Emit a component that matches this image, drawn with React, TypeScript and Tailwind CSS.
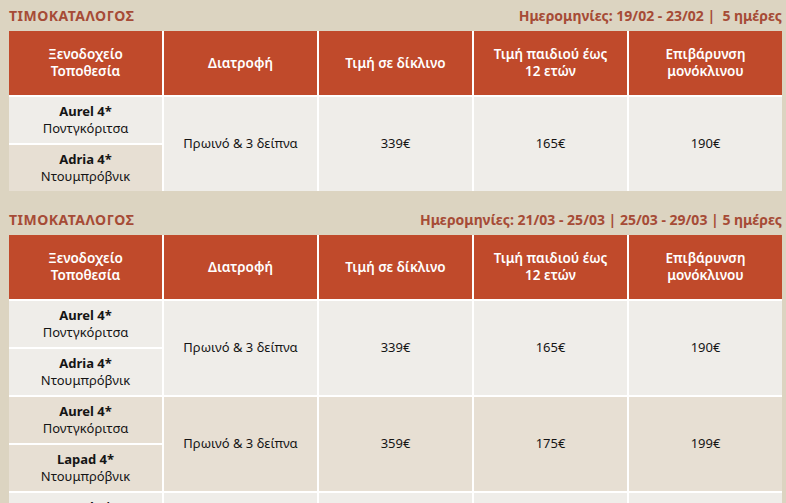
const headers = [
  ["Ξενοδοχείο", "Τοποθεσία"],
  ["Διατροφή"],
  ["Τιμή σε δίκλινο"],
  ["Τιμή παιδιού έως", "12 ετών"],
  ["Επιβάρυνση", "μονόκλινου"],
];

const LIGHT = "bg-[#efede9]";
const BEIGE = "bg-[#e7dfd3]";

type Group = {
  hotels: { name: string; place: string; bg: string }[];
  bg: string;
  board: string;
  double: string;
  child: string;
  single: string;
};

const tables: { dates: string; groups: Group[] }[] = [
  {
    dates: "Ημερομηνίες: 19/02 - 23/02 |\u00a0 5 ημέρες",
    groups: [
      {
        hotels: [
          { name: "Aurel 4*", place: "Ποντγκόριτσα", bg: LIGHT },
          { name: "Adria 4*", place: "Ντουμπρόβνικ", bg: BEIGE },
        ],
        bg: LIGHT,
        board: "Πρωινό & 3 δείπνα",
        double: "339€",
        child: "165€",
        single: "190€",
      },
    ],
  },
  {
    dates: "Ημερομηνίες: 21/03 - 25/03 | 25/03 - 29/03 | 5 ημέρες",
    groups: [
      {
        hotels: [
          { name: "Aurel 4*", place: "Ποντγκόριτσα", bg: LIGHT },
          { name: "Adria 4*", place: "Ντουμπρόβνικ", bg: LIGHT },
        ],
        bg: LIGHT,
        board: "Πρωινό & 3 δείπνα",
        double: "339€",
        child: "165€",
        single: "190€",
      },
      {
        hotels: [
          { name: "Aurel 4*", place: "Ποντγκόριτσα", bg: BEIGE },
          { name: "Lapad 4*", place: "Ντουμπρόβνικ", bg: BEIGE },
        ],
        bg: BEIGE,
        board: "Πρωινό & 3 δείπνα",
        double: "359€",
        child: "175€",
        single: "199€",
      },
      {
        hotels: [
          { name: "Aurel 4*", place: "Ποντγκόριτσα", bg: LIGHT },
          { name: "Dubrovnik 4*", place: "Ντουμπρόβνικ", bg: LIGHT },
        ],
        bg: LIGHT,
        board: "Πρωινό & 3 δείπνα",
        double: "369€",
        child: "180€",
        single: "210€",
      },
    ],
  },
];

function PriceTable({ dates, groups }: { dates: string; groups: Group[] }) {
  return (
    <section>
      <div className="flex h-[31px] items-center justify-between text-[14px] font-bold text-[#a64b36]">
        <span className="tracking-[0.5px]">ΤΙΜΟΚΑΤΑΛΟΓΟΣ</span>
        <span>{dates}</span>
      </div>
      <div className="grid grid-cols-[repeat(5,153px)] gap-[2px] bg-white">
        {headers.map((h, i) => (
          <div
            key={i}
            className="flex h-[64px] flex-col items-center justify-center bg-[#c04a2b] text-center text-[13.5px] font-semibold leading-[17px] text-white"
          >
            {h.map((line) => (
              <span key={line}>{line}</span>
            ))}
          </div>
        ))}
        {groups.map((g, gi) => {
          const cell = `row-span-2 flex items-center justify-center text-[13px] text-[#151515] ${g.bg}`;
          const hotel = (i: number) => (
            <div
              key={`h${i}-${gi}`}
              className={`flex h-[46px] flex-col items-center justify-center text-[13px] leading-[17px] text-[#151515] ${g.hotels[i].bg}`}
            >
              <span className="font-bold">{g.hotels[i].name}</span>
              <span>{g.hotels[i].place}</span>
            </div>
          );
          return [
            hotel(0),
            <div key={`b-${gi}`} className={cell}>
              {g.board}
            </div>,
            <div key={`d-${gi}`} className={cell}>
              {g.double}
            </div>,
            <div key={`c-${gi}`} className={cell}>
              {g.child}
            </div>,
            <div key={`s-${gi}`} className={cell}>
              {g.single}
            </div>,
            hotel(1),
          ];
        })}
      </div>
    </section>
  );
}

export default function App() {
  return (
    <div
      className="flex min-h-[503px] w-[786px] flex-col gap-[13px] bg-[#dcd4c1] pl-[9px] pr-[4px]"
      style={{ fontFamily: '"Noto Sans", sans-serif' }}
    >
      {tables.map((t, i) => (
        <PriceTable key={i} dates={t.dates} groups={t.groups} />
      ))}
    </div>
  );
}
